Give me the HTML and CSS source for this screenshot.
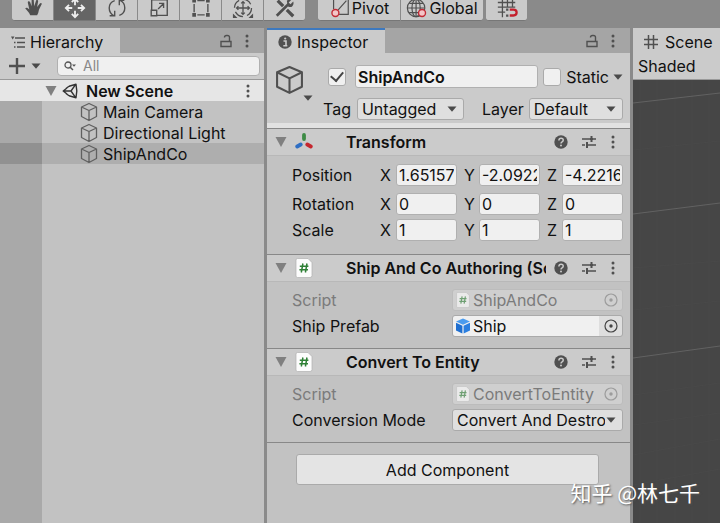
FILE: index.html
```html
<!DOCTYPE html>
<html lang="en">
<head>
<meta charset="utf-8">
<title>Editor</title>
<link rel="stylesheet" href="styles.css">
</head>
<body>
<svg class="defs" aria-hidden="true">
  <symbol id="cube" viewBox="0 0 20 20"><path d="M10 1.500 17.500 5v9.500L10 18.500 2.500 14.500V5ZM2.500 5 10 8.500 17.500 5M10 8.500v10" fill="none" stroke="currentColor" stroke-width="1.300" stroke-linejoin="round"/></symbol>
  <symbol id="dots" viewBox="0 0 6 16"><circle cx="3" cy="3" r="1.500"/><circle cx="3" cy="8" r="1.500"/><circle cx="3" cy="13" r="1.500"/></symbol>
  <symbol id="lock" viewBox="0 0 12 14"><path d="M1 7.500h10v5H1ZM9.500 7V3.500q0-2-2-2h-1q-2 0-2 2" fill="none" stroke="currentColor" stroke-width="1.400"/></symbol>
  <symbol id="fold" viewBox="0 0 12 12"><path d="M.5 1h11L6 11Z"/></symbol>
  <symbol id="caret" viewBox="0 0 10 6"><path d="M.5 .5h9L5 5.700Z"/></symbol>
  <symbol id="help" viewBox="0 0 14 14"><circle cx="7" cy="7" r="6.700"/><path d="M4.900 5.500q0-2.200 2.200-2.200T9.200 5.200q0 1-1.100 1.600Q7 7.400 7 8.500" fill="none" stroke="#cbcbcb" stroke-width="1.500"/><circle cx="7" cy="10.600" r="1" fill="#cbcbcb"/></symbol>
  <symbol id="preset" viewBox="0 0 14 14"><path d="M0 4h8M11 4h3M0 10h3M6 10h8" stroke="currentColor" stroke-width="1.400"/><path d="M9.500 1v6M8 4h3M5 7v6" stroke="currentColor" stroke-width="2"/></symbol>
  <symbol id="script" viewBox="0 0 18 20"><path d="M2.500.5h10.500l4 4v13q0 2-2 2h-12.500q-1.500 0-1.500-1.500V2q0-1.500 1.500-1.500Z" fill="#fcfcfc" stroke="#b0b0b0" stroke-width=".7"/><path d="M7.900 5.500 6.300 14.500M12 5.500l-1.600 9M4.800 8.300h8.600M4.400 11.800H13" stroke="#2f8036" stroke-width="1.500"/></symbol>
  <symbol id="picker" viewBox="0 0 14 14"><circle cx="7" cy="7" r="6" fill="none" stroke="currentColor" stroke-width="1.200"/><circle cx="7" cy="7" r="1.700"/></symbol>
</svg>

<header class="toolbar">
  <div class="tools">
    <button class="tool" aria-label="Hand"><svg class="tool-icon" viewBox="0 0 24 24"><path d="M9 20C8 17 5 14 3.500 12.500c1-1.500 2.500-1 4.500 1L6.300 6q0-1.500 1-1.500T8.800 5.500L10.500 10V3q0-1.500 1-1.500t1.300 1.500L13.300 10 15.300 4q.6-1.200 1.500-.8t.8 1.500L16.500 11l3-4q1-.9 1.700-.2t.1 1.500L18.500 14q-.5 3.500-2 6Z"/></svg></button>
    <button class="tool tool--active" aria-label="Move"><svg class="tool-icon" viewBox="0 0 24 24"><path d="M12 2v7m0 6v7M2 12h7m6 0h7M8.500 5.500 12 2l3.500 3.500M8.500 18.500 12 22l3.500-3.500M5.500 8.500 2 12l3.500 3.500M18.500 8.500 22 12l-3.500 3.500" fill="none" stroke="currentColor" stroke-width="2"/></svg></button>
    <button class="tool" aria-label="Rotate"><svg class="tool-icon" viewBox="0 0 24 24"><path d="M9 20.500Q3.500 18 3.500 12T9.500 4M4 20.500h5.500V15M15 3.500q5.500 2.500 5.500 8.500t-6 8M20 3.500h-5.500V9" fill="none" stroke="currentColor" stroke-width="1.500"/></svg></button>
    <button class="tool" aria-label="Scale"><svg class="tool-icon" viewBox="0 0 24 24"><path d="M4 14V3h17v17H10M3.500 14.500h6v6h-6ZM11 13l6-6M12 7h5v5" fill="none" stroke="currentColor" stroke-width="1.500"/></svg></button>
    <button class="tool" aria-label="Rect"><svg class="tool-icon" viewBox="0 0 24 24"><path d="M8 4h8M8 19.500h8M4.500 7.500v9M19.500 7.500v9" stroke="currentColor" stroke-width="1.500"/><path d="M2.500 2h4v4h-4ZM17.500 2h4v4h-4ZM2.500 17.500h4v4h-4ZM17.500 17.500h4v4h-4Z"/></svg></button>
    <button class="tool" aria-label="Transform"><svg class="tool-icon" viewBox="0 0 24 24"><path d="M12 5v14M5 12h14M10 7l2-2 2 2M10 17l2 2 2-2M7 10l-2 2 2 2M17 10l2 2-2 2" fill="none" stroke="currentColor" stroke-width="1.400"/><circle cx="12" cy="12" r="9.300" fill="none" stroke="currentColor" stroke-width="1.400" stroke-dasharray="10 4.600"/><path d="M1 18v5h5ZM18 23h5v-5Z"/></svg></button>
    <button class="tool" aria-label="Custom tools"><svg class="tool-icon" viewBox="0 0 24 24"><path d="m4 4 6 6M14 14l7 7" stroke="currentColor" stroke-width="3.500"/><path d="m3 20.500 13-13" stroke="currentColor" stroke-width="3"/><path d="M14 4q3-2 5-1l-3 3 2 2 3-3q1 3-1 5t-5 0Z"/></svg></button>
  </div>
  <div class="tools">
    <button class="tool tool--wide"><svg class="tool-icon" viewBox="0 0 24 24"><path d="M5 13V2h16v17H11M10 14 19 4" fill="none" stroke="currentColor" stroke-width="1.300"/><circle cx="7" cy="17.500" r="3.800" fill="#f4c5c8" stroke="#c22a35" stroke-width="1.500"/></svg>Pivot</button>
    <button class="tool tool--wide"><svg class="tool-icon" viewBox="0 0 24 24"><g fill="none" stroke="currentColor" stroke-width="1.300"><circle cx="11" cy="12" r="9.500"/><ellipse cx="11" cy="12" rx="4.500" ry="9.500"/><path d="M11 3v18M2 12h18M3.500 7h15M3.500 17h15"/></g><circle cx="17.500" cy="17.500" r="3.800" fill="#f4c5c8" stroke="#c22a35" stroke-width="1.500"/></svg>Global</button>
  </div>
  <div class="tools tools--snap">
    <button class="tool" aria-label="Grid snapping"><svg class="tool-icon" viewBox="0 0 24 24"><path d="M7 2v20M12.500 2v9M18 2v9M2 6h19M2 11h19M2 16.500h8" fill="none" stroke="currentColor" stroke-width="1.400"/><path d="M15 13.800h4q3.500 0 3.500 3.200t-3.500 3.200h-4" fill="none" stroke="#c41f2c" stroke-width="2.500"/><path d="M11 12.500h2.500V15H11ZM11 19h2.500v2.500H11Z"/></svg></button>
  </div>
</header>

<main class="workspace">
  <section class="panel hierarchy">
    <div class="tabbar">
      <h2 class="tab tab--hierarchy"><svg class="icon-14" viewBox="0 0 14 14"><path d="M4 3h10M6 7.500h8M6 12h8M3 7.500h1.500M3 12h1.500" stroke="currentColor" stroke-width="1.400"/><path d="M0 1.500h3.500L1.700 4.500Z"/></svg>Hierarchy</h2>
      <button class="icon-button" aria-label="Lock hierarchy"><svg class="lock"><use href="#lock"/></svg></button>
      <button class="icon-button" aria-label="Hierarchy menu"><svg class="dots"><use href="#dots"/></svg></button>
    </div>
    <div class="searchbar">
      <button class="icon-button add" aria-label="Create"><svg class="plus" viewBox="0 0 16 16"><path d="M8 0v16M0 8h16" stroke="currentColor" stroke-width="2.400"/></svg><svg class="caret"><use href="#caret"/></svg></button>
      <label class="search"><svg class="search-icon" viewBox="0 0 12 10"><circle cx="4" cy="4" r="3" fill="none" stroke="currentColor" stroke-width="1.300"/><path d="m6 6 3 3" stroke="currentColor" stroke-width="1.500"/><path d="M8 3.500h4l-2 2.200Z"/></svg><input class="search-input" type="text" placeholder="All" aria-label="Search hierarchy"></label>
    </div>
    <div class="scene-row">
      <svg class="fold"><use href="#fold"/></svg>
      <svg class="unity" viewBox="0 0 16 16"><path d="M5 5 1.200 8 5 11M1.200 8H9M7 3.200 14 1.300 14.800 8 14 14.700 7 12.800M9 8l4.500-6.300M9 8l4.500 6.300M7 3.200 4 5.500M7 12.800 4 10.500" fill="none" stroke="currentColor" stroke-width="1.400" stroke-linejoin="round"/></svg>
      <span class="scene-name">New Scene</span>
      <button class="icon-button" aria-label="Scene menu"><svg class="dots"><use href="#dots"/></svg></button>
    </div>
    <ul class="tree">
      <li class="node"><svg class="cube"><use href="#cube"/></svg>Main Camera</li>
      <li class="node"><svg class="cube"><use href="#cube"/></svg>Directional Light</li>
      <li class="node node--selected"><svg class="cube"><use href="#cube"/></svg>ShipAndCo</li>
    </ul>
  </section>

  <section class="panel inspector">
    <div class="tabbar">
      <h2 class="tab tab--focused"><svg class="icon-14" viewBox="0 0 14 14"><circle cx="7" cy="7" r="6.700"/><path d="M5.500 6H8v4.500M5.300 10.800h4" fill="none" stroke="#cbcbcb" stroke-width="1.600"/><circle cx="7.200" cy="3.500" r="1.100" fill="#cbcbcb"/></svg>Inspector</h2>
      <button class="icon-button" aria-label="Lock inspector"><svg class="lock"><use href="#lock"/></svg></button>
      <button class="icon-button" aria-label="Inspector menu"><svg class="dots"><use href="#dots"/></svg></button>
    </div>
    <div class="object">
      <button class="icon-button object-icon" aria-label="Object icon"><svg class="cube-large" viewBox="0 0 28 28"><path d="M14 1.500 26 6.500v14L14 26.500 2 20.500v-14ZM2 6.500l12 6 12-6M14 12.500v14" fill="none" stroke="currentColor" stroke-width="2" stroke-linejoin="round"/></svg><svg class="caret"><use href="#caret"/></svg></button>
      <div class="object-fields">
        <div class="object-row">
          <input class="check" type="checkbox" checked aria-label="Active">
          <input class="field name" type="text" value="ShipAndCo" aria-label="Name">
          <input class="check" type="checkbox" id="static">
          <label class="static-label" for="static">Static</label>
          <svg class="caret"><use href="#caret"/></svg>
        </div>
        <div class="object-row object-row--tags">
          <label for="tag">Tag</label>
          <span class="dropdown dropdown--tag"><select class="select" id="tag"><option>Untagged</option></select><svg class="caret"><use href="#caret"/></svg></span>
          <label class="layer-label" for="layer">Layer</label>
          <span class="dropdown dropdown--layer"><select class="select" id="layer"><option>Default</option></select><svg class="caret"><use href="#caret"/></svg></span>
        </div>
      </div>
    </div>

    <section class="component">
      <div class="component-head">
        <svg class="fold"><use href="#fold"/></svg>
        <svg class="component-icon" viewBox="0 0 18 18"><g stroke-width="3.800" stroke-linecap="round"><path d="M9 2v4" stroke="#3d8b45"/><path d="M5.700 11.500 2.200 13.500" stroke="#2f6fc4"/><path d="m12.300 11.500 3.500 2" stroke="#c5262e"/></g></svg>
        <h3 class="component-title">Transform</h3>
        <button class="icon-button" aria-label="Help"><svg class="icon-14"><use href="#help"/></svg></button>
        <button class="icon-button" aria-label="Presets"><svg class="icon-14"><use href="#preset"/></svg></button>
        <button class="icon-button" aria-label="Component menu"><svg class="dots"><use href="#dots"/></svg></button>
      </div>
      <div class="component-body component-body--vectors">
        <div class="vector vector--position"><span>Position</span><label for="px">X</label><input class="field" id="px" value="1.65157"><label for="py">Y</label><input class="field" id="py" value="-2.09225"><label for="pz">Z</label><input class="field" id="pz" value="-4.22163"></div>
        <div class="vector"><span>Rotation</span><label for="rx">X</label><input class="field" id="rx" value="0"><label for="ry">Y</label><input class="field" id="ry" value="0"><label for="rz">Z</label><input class="field" id="rz" value="0"></div>
        <div class="vector"><span>Scale</span><label for="sx">X</label><input class="field" id="sx" value="1"><label for="sy">Y</label><input class="field" id="sy" value="1"><label for="sz">Z</label><input class="field" id="sz" value="1"></div>
      </div>
    </section>

    <section class="component">
      <div class="component-head">
        <svg class="fold"><use href="#fold"/></svg>
        <svg class="component-icon"><use href="#script"/></svg>
        <h3 class="component-title">Ship And Co Authoring (Script)</h3>
        <button class="icon-button" aria-label="Help"><svg class="icon-14"><use href="#help"/></svg></button>
        <button class="icon-button" aria-label="Presets"><svg class="icon-14"><use href="#preset"/></svg></button>
        <button class="icon-button" aria-label="Component menu"><svg class="dots"><use href="#dots"/></svg></button>
      </div>
      <div class="component-body">
        <div class="property property--disabled"><span>Script</span><button class="reference" disabled><svg class="ref-icon"><use href="#script"/></svg><span class="ref-name">ShipAndCo</span><svg class="icon-14"><use href="#picker"/></svg></button></div>
        <div class="property"><span>Ship Prefab</span><button class="reference"><svg class="ref-icon" viewBox="0 0 16 16"><path d="m8 .5 7 3L8 6.700 1 3.500Z" fill="#4a9bee"/><path d="m1 4.700 6.400 3V15.500L1 12.500Z" fill="#1f6fd0"/><path d="m15 4.700-6.400 3V15.500L15 12.500Z" fill="#2b7fe0"/></svg><span class="ref-name">Ship</span><span class="ref-pick"><svg class="icon-14"><use href="#picker"/></svg></span></button></div>
      </div>
    </section>

    <section class="component">
      <div class="component-head">
        <svg class="fold"><use href="#fold"/></svg>
        <svg class="component-icon"><use href="#script"/></svg>
        <h3 class="component-title">Convert To Entity</h3>
        <button class="icon-button" aria-label="Help"><svg class="icon-14"><use href="#help"/></svg></button>
        <button class="icon-button" aria-label="Presets"><svg class="icon-14"><use href="#preset"/></svg></button>
        <button class="icon-button" aria-label="Component menu"><svg class="dots"><use href="#dots"/></svg></button>
      </div>
      <div class="component-body">
        <div class="property property--disabled"><span>Script</span><button class="reference" disabled><svg class="ref-icon"><use href="#script"/></svg><span class="ref-name">ConvertToEntity</span><svg class="icon-14"><use href="#picker"/></svg></button></div>
        <div class="property"><label for="mode">Conversion Mode</label><span class="dropdown"><select class="select" id="mode"><option>Convert And Destroy</option></select><svg class="caret"><use href="#caret"/></svg></span></div>
      </div>
    </section>

    <div class="add-area"><button class="add-component">Add Component</button></div>
  </section>

  <section class="panel scene">
    <h2 class="scene-tab"><svg class="icon-14" viewBox="0 0 14 14"><path d="M4.500 0v14M9.500 0v14M0 4.500h14M0 9.500h14" stroke="currentColor" stroke-width="1.500"/></svg>Scene</h2>
    <div class="scene-mode">Shaded</div>
    <svg class="viewport" viewBox="0 0 87 443" preserveAspectRatio="none"><path d="M0 70l87-9M0 188l87-7M0 230l87-9M0 315l87-12M0 345l87-12M0 375l87-16M0 405l87-16M7 0v443M24 0v443M42 0v443M59 0v443M76 0v443" fill="none" stroke="#494949"/><path d="M0 23 87 13M0 134 87 123M0 278 87 266" fill="none" stroke="#626262"/></svg>
  </section>
</main>
<div class="watermark">知乎 @林七千</div>
</body>
</html>
```

FILE: styles.css
```css
* { box-sizing: border-box; }

html, body { height: 100%; }

body {
  margin: 0;
  display: flex;
  flex-direction: column;
  overflow: hidden;
  background: #8a8a8a;
  color: #111;
  font: 16px/20px Inter, "Noto Sans CJK SC", sans-serif;
}

h2, h3, ul { margin: 0; padding: 0; font-size: 16px; }
h2 { font-weight: 400; }
button, input, select { font: inherit; color: inherit; margin: 0; }
svg { display: block; flex: none; fill: currentColor; }

.defs { display: none; }
.icon-14 { width: 14px; height: 14px; }
.dots { width: 6px; height: 16px; }
.lock { width: 12px; height: 14px; }
.caret { width: 10px; height: 6px; color: #4a4a4a; }
.fold { width: 12px; height: 12px; color: #808080; }
.cube { width: 20px; height: 20px; color: #606060; }

.icon-button {
  display: flex;
  align-items: center;
  padding: 0;
  border: 0;
  background: none;
  color: #505050;
}

/* Toolbar */
.toolbar { display: flex; gap: 13px; height: 28px; padding: 0 12px; flex: none; }
.tools { display: flex; gap: 1px; height: 21px; }
.tools--snap { margin-left: -10px; }
.tool {
  display: flex;
  justify-content: center;
  align-items: center;
  gap: 1px;
  width: 41px;
  height: 21px;
  padding: 0 0 4px;
  border: 0;
  border-bottom: 1px solid #777;
  background: #cacaca;
  line-height: 16px;
}
.tools .tool:last-child { border-bottom-right-radius: 3px; }
.tools .tool:first-child { border-bottom-left-radius: 3px; }
.tool--active { background: #656565; }
.tool--wide { width: 82px; }
.tool-icon { width: 22px; height: 22px; color: #505050; }
.tool--active .tool-icon { color: #eee; }

/* Panels */
.workspace {
  display: grid;
  grid-template-columns: 264fr 363fr 87fr;
  gap: 3px;
  flex: 1;
  min-height: 0;
}
.panel { display: flex; flex-direction: column; min-width: 0; background: #c2c2c2; }
.tabbar { display: flex; gap: 12px; height: 25px; padding-right: 14px; background: #a5a5a5; }
.tab {
  display: flex;
  align-items: center;
  gap: 5px;
  height: 25px;
  margin-right: auto;
  padding: 2px 17px 0 11px;
  background: #cbcbcb;
}
.tab .icon-14 { color: #505050; }
.tab--focused { border-top: 2px solid #3d79bf; padding-top: 0; }

/* Hierarchy */
.searchbar {
  display: flex;
  align-items: center;
  gap: 16px;
  height: 27px;
  padding: 0 4px 0 9px;
  border-bottom: 1px solid #999;
  background: #cbcbcb;
}
.add { gap: 6px; }
.plus { width: 16px; height: 16px; }
.search {
  display: flex;
  align-items: center;
  flex: 1;
  gap: 7px;
  min-width: 0;
  height: 20px;
  padding: 0 6px;
  border: 1px solid #b0b0b0;
  border-radius: 4px;
  background: #f0f0f0;
}
.search-icon { width: 12px; height: 10px; color: #555; }
.search-input { width: 100%; min-width: 0; padding: 0; border: 0; background: none; font-size: 14px; line-height: 18px; }
.search-input::placeholder { color: #888; }
.scene-row { display: flex; align-items: center; height: 21px; padding: 0 13px 0 45px; background: #e6e6e6; }
.unity { width: 16px; height: 16px; margin: 0 8px 0 5px; color: #333; }
.scene-name { flex: 1; font-weight: 600; }
.tree { flex: 1; list-style: none; background: linear-gradient(90deg, #a9a9a9 42px, transparent 42px); }
.node { display: flex; align-items: center; gap: 4px; height: 21px; padding-left: 79px; }
.node--selected { background: linear-gradient(90deg, #919191 42px, #aeaeae 42px); }

/* Inspector */
.object {
  display: flex;
  gap: 15px;
  height: 75px;
  padding: 12px 7px 0 8px;
  border-bottom: 5px solid #e2e2e2;
  background: #cbcbcb;
}
.object-icon { width: 38px; height: 36px; align-items: flex-end; }
.object-icon .caret { margin-left: -1px; }
.cube-large { width: 29px; height: 30px; align-self: flex-start; }
.object-fields { display: flex; flex: 1; flex-direction: column; gap: 9px; min-width: 0; }
.object-row { display: flex; align-items: center; height: 23px; }
.object-row--tags { margin-left: -5px; }
.check {
  appearance: none;
  display: grid;
  place-items: center;
  flex: none;
  width: 18px;
  height: 18px;
  border: 1px solid #aaa;
  border-radius: 3px;
  background: #f0f0f0;
}
.check:checked::after {
  content: "";
  width: 6px;
  height: 10px;
  margin-bottom: 3px;
  border: solid #444;
  border-width: 0 2px 2px 0;
  rotate: 40deg;
}
.field {
  min-width: 0;
  height: 22px;
  padding: 0 2px;
  border: 1px solid #b0b0b0;
  border-radius: 3px;
  background: #f0f0f0;
}
.name { flex: 1; height: 23px; margin: 0 5px 0 9px; font-weight: 600; }
.static-label { margin: 0 4px 0 5px; }
.dropdown {
  display: grid;
  grid-template-columns: 1fr 16px;
  align-items: center;
  height: 22px;
  min-width: 0;
  border: 1px solid #aaa;
  border-radius: 3px;
  background: #dfdfdf;
}
.dropdown .caret { grid-area: 1 / 2; pointer-events: none; }
.select {
  appearance: none;
  grid-area: 1 / 1 / 2 / 3;
  width: 100%;
  min-width: 0;
  height: 20px;
  padding: 0 17px 0 4px;
  border: 0;
  background: none;
}
.dropdown--tag { flex: 107; margin-left: 6px; }
.dropdown--layer { flex: 94; margin-left: 5px; }
.layer-label { margin-left: 18px; }

.component { border-top: 1px solid #888; }
.component-head {
  display: flex;
  align-items: center;
  height: 27px;
  padding: 0 14px 0 8px;
  border-bottom: 1px solid #b8b8b8;
  background: #cbcbcb;
}
.component-head .icon-button + .icon-button { margin-left: 14px; }
.component-icon { width: 18px; height: 20px; margin: 0 33px 0 8px; }
.component-title { flex: 1; margin-right: 8px; overflow: hidden; white-space: nowrap; font-weight: 600; }
.component-body { display: flex; flex-direction: column; gap: 4px; padding: 7px 7px 11px 25px; }
.component-body--vectors { padding: 8px 7px 13px 25px; }
.vector {
  display: grid;
  grid-template-columns: 88px 16px 1fr 22px 1fr 22px 1fr;
  align-items: center;
}
.vector .field { width: 100%; }
.vector .field + label { padding-left: 7px; }
.vector--position { margin-bottom: 3px; }
.property { display: grid; grid-template-columns: 160px minmax(0, 1fr); align-items: center; }
.property--disabled { color: #7b7b7b; }
.reference {
  display: flex;
  align-items: center;
  height: 22px;
  padding: 0 4px 0 2px;
  overflow: hidden;
  border: 1px solid #aaa;
  border-radius: 3px;
  background: linear-gradient(270deg, #dedede 23px, #f0f0f0 23px);
  text-align: left;
}
.reference:disabled { border-color: #bcbcbc; background: #cfcfcf; }
.reference:disabled svg { opacity: .6; }
.ref-icon { width: 16px; height: 16px; margin-right: 2px; }
.ref-name { flex: 1; }
.ref-pick { color: #444; }
.add-area { padding: 11px 31px 0 29px; border-top: 1px solid #888; }
.add-component {
  width: 100%;
  height: 31px;
  border: 1px solid #aaa;
  border-radius: 3px;
  background: #e4e4e4;
}

/* Scene */
.scene-tab { display: flex; align-items: center; gap: 7px; height: 25px; padding: 2px 0 0 11px; background: #cbcbcb; }
.scene-tab .icon-14 { color: #505050; }
.scene-mode { height: 27px; padding: 3px 5px; border-bottom: 1px solid #999; background: #cbcbcb; }
.viewport { flex: 1; width: 100%; min-height: 0; background: #464646; }

.watermark {
  position: absolute;
  right: 20px;
  bottom: 17px;
  color: #fff;
  font: 21px/28px "Noto Sans CJK SC", sans-serif;
  text-shadow: 1px 1px 2px #555;
}
```
